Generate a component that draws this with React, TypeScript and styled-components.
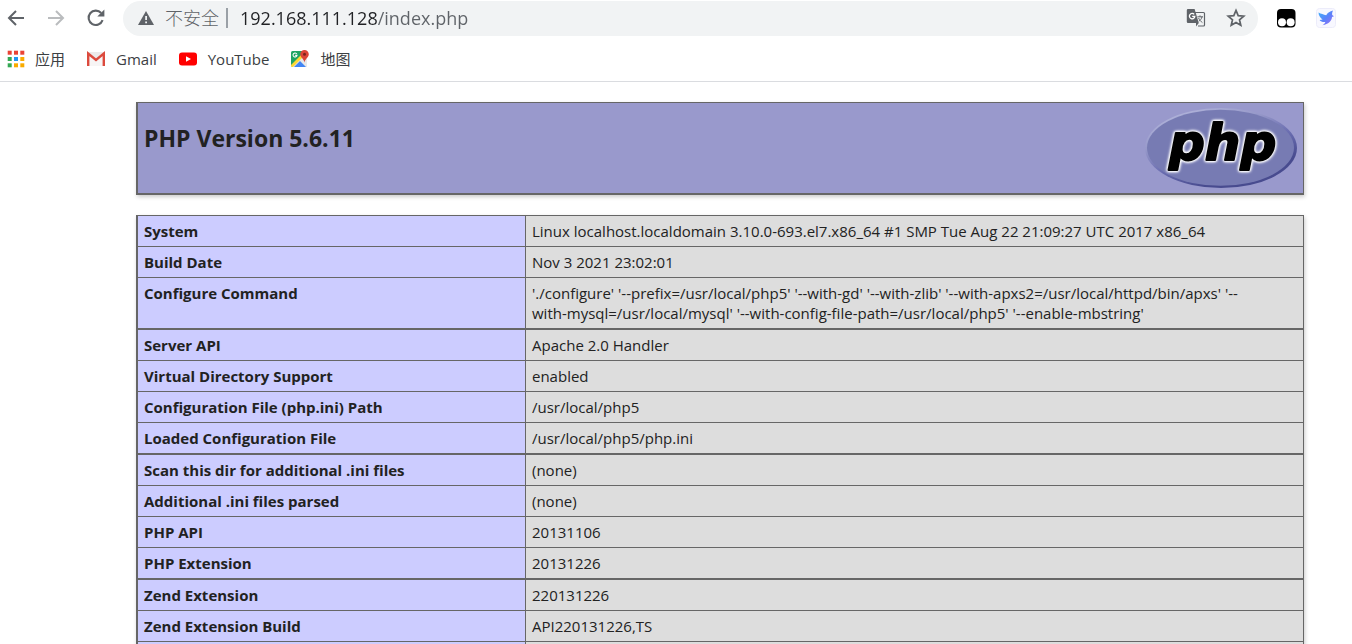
import React from 'react';
import styled, { createGlobalStyle } from 'styled-components';

const Global = createGlobalStyle`
  * { box-sizing: border-box; }
  body {
    margin: 0;
    height: 100vh;
    overflow: hidden;
    background: #fff;
    color: #222;
    font-family: "Open Sans", "Noto Sans CJK SC", sans-serif;
    font-size: 15px;
    line-height: 20px;
  }
`;

const Toolbar = styled.header`
  display: flex;
  align-items: center;
  height: 36px;
  padding-right: 6px;
`;

const IconButton = styled.button`
  display: flex;
  align-items: center;
  justify-content: center;
  flex: none;
  width: 40px;
  height: 32px;
  padding: 0;
  border: 0;
  background: none;
`;

const NavGroup = styled.nav`
  display: flex;
  flex: none;
  margin-left: -4px;
  margin-right: 7px;
`;

const AddressBar = styled.div`
  display: flex;
  flex: 1;
  align-items: center;
  min-width: 0;
  height: 35px;
  margin-top: 1px;
  padding: 0 2px 1px 15px;
  border-radius: 18px;
  background: #f1f3f4;
`;

const SecurityButton = styled.button`
  display: flex;
  flex: none;
  align-items: center;
  gap: 11px;
  padding: 0 7px 0 0;
  border: 0;
  border-right: 2px solid #9aa0a6;
  background: none;
  color: #5f6368;
  font-family: inherit;
  font-size: 18px;
  font-weight: 300;
  line-height: 20px;
`;

const UrlInput = styled.input`
  flex: 1;
  min-width: 0;
  height: 30px;
  margin-left: 12px;
  padding: 0;
  border: 0;
  outline: 0;
  background: linear-gradient(90deg, #202124 137px, #5f6368 137px) text;
  color: transparent;
  font-family: inherit;
  font-size: 18px;
`;

const Extensions = styled.div`
  display: flex;
  margin-left: 8px;
`;

const Bookmarks = styled.nav`
  display: flex;
  align-items: center;
  gap: 21px;
  height: 46px;
  padding: 1px 7px 0;
  border-bottom: 1px solid #dadce0;
`;

const Bookmark = styled.a`
  display: flex;
  align-items: center;
  gap: 10px;
  color: #3c4043;
  font-size: 15px;
  text-decoration: none;
`;

const Page = styled.main`
  padding: 20px 48px 0 136px;
`;

const Banner = styled.section`
  display: flex;
  align-items: flex-start;
  justify-content: space-between;
  height: 93px;
  padding: 3px 6px;
  border: solid #666;
  border-width: 1px 1px 2px 2px;
  background: #9999cc;
  box-shadow: 1px 2px 4px #ccc;
`;

const Title = styled.h1`
  margin: 16px 0 0;
  font-size: 23px;
  line-height: 32px;
`;

const InfoTable = styled.table`
  width: 100%;
  margin-top: 20px;
  border: solid #666;
  border-width: 1px 1px 0 2px;
  border-spacing: 0;
  box-shadow: 1px 2px 4px #ccc;
`;

const Row = styled.tr<{ $heavy?: boolean }>`
  > * {
    height: 31px;
    padding: 5px 6px;
    border-bottom: ${(p) => (p.$heavy ? 2 : 1)}px solid #666;
    text-align: left;
    vertical-align: top;
  }
`;

const Label = styled.th`
  width: 388px;
  border-right: 1px solid #666;
  background: #ccccff;
`;

const Value = styled.td`
  background: #ddd;
`;

const Unbroken = styled.span`
  white-space: nowrap;
`;

const rows: { label: string; value: React.ReactNode; heavy?: boolean }[] = [
  { label: 'System', value: 'Linux localhost.localdomain 3.10.0-693.el7.x86_64 #1 SMP Tue Aug 22 21:09:27 UTC 2017 x86_64' },
  { label: 'Build Date', value: 'Nov 3 2021 23:02:01' },
  {
    label: 'Configure Command',
    value: (
      <>
        './configure' '--prefix=/usr/local/php5' '--with-gd' '--with-zlib' '--with-apxs2=/usr/local/httpd/bin/apxs' '--
        <wbr />
        <Unbroken>with-mysql=/usr/local/mysql'</Unbroken> '--with-config-file-path=/usr/local/php5' '--enable-mbstring'
      </>
    ),
    heavy: true,
  },
  { label: 'Server API', value: 'Apache 2.0 Handler' },
  { label: 'Virtual Directory Support', value: 'enabled' },
  { label: 'Configuration File (php.ini) Path', value: '/usr/local/php5' },
  { label: 'Loaded Configuration File', value: '/usr/local/php5/php.ini', heavy: true },
  { label: 'Scan this dir for additional .ini files', value: '(none)' },
  { label: 'Additional .ini files parsed', value: '(none)' },
  { label: 'PHP API', value: '20131106' },
  { label: 'PHP Extension', value: '20131226', heavy: true },
  { label: 'Zend Extension', value: '220131226' },
  { label: 'Zend Extension Build', value: 'API220131226,TS' },
  { label: '', value: '' },
];

const ArrowIcon = ({ color, flip }: { color: string; flip?: boolean }) => (
  <svg width="18" height="18" viewBox="0 0 18 18" fill="none" stroke={color} strokeWidth="2">
    <path d={flip ? 'M1 9H16M9 2L16 9L9 16' : 'M17 9H2M9 2L2 9L9 16'} />
  </svg>
);

const ReloadIcon = () => (
  <svg width="20" height="20" viewBox="0 0 20 20">
    <path d="M16.6 12.2A7.2 7.2 0 1 1 15.2 5" fill="none" stroke="#5f6368" strokeWidth="2.1" />
    <path d="M18.4 1.5V8.6H11.3Z" fill="#5f6368" />
  </svg>
);

const WarningIcon = () => (
  <svg width="16" height="16" viewBox="0 0 16 16">
    <path d="M8 1L16 15H0Z" fill="#5f6368" />
    <path d="M7.2 6h1.8v4H7.2zM7.2 11.4h1.8v1.8H7.2z" fill="#f1f3f4" />
  </svg>
);

const TranslateIcon = () => (
  <svg width="20" height="20" viewBox="0 0 20 20">
    <path d="M8 4.5H17.5a1 1 0 0 1 1 1V17a1 1 0 0 1-1 1H12" fill="none" stroke="#5f6368" strokeWidth="1.2" />
    <path d="M2 1H8.6L12.8 15H2a1.2 1.2 0 0 1-1.2-1.2V2.2A1.2 1.2 0 0 1 2 1Z" fill="#5f6368" />
    <path d="M12.8 15L10 18.4V15Z" fill="#5f6368" />
    <path d="M8.2 6.4A2.7 2.7 0 1 0 8.8 8.4H6.2" fill="none" stroke="#fff" strokeWidth="1.3" />
    <path d="M11.4 8.8H17M14 7.4V8.8M16 8.8C15.6 11 14 12.4 12.8 13.2M12.6 10C13.4 12 15 13.6 16.4 14.6" fill="none" stroke="#5f6368" />
  </svg>
);

const StarIcon = () => (
  <svg width="20" height="20" viewBox="0 0 20 20">
    <path
      d="M10 2.4L12.2 7.6L17.8 8.1L13.5 11.8L14.8 17.3L10 14.4L5.2 17.3L6.5 11.8L2.2 8.1L7.8 7.6Z"
      fill="none"
      stroke="#5f6368"
      strokeWidth="1.7"
    />
  </svg>
);

const MonkeyIcon = () => (
  <svg width="20" height="20" viewBox="0 0 20 20">
    <rect x="1" y="1" width="18.500" height="18.500" rx="4" fill="#000" />
    <circle cx="6" cy="14.200" r="4" fill="#fff" />
    <circle cx="14.600" cy="14.200" r="4" fill="#fff" />
  </svg>
);

const BirdIcon = () => (
  <svg width="20" height="20" viewBox="0 0 20 20">
    <defs>
      <linearGradient id="bird" x1="0" y1="0" x2="1" y2="1">
        <stop offset="0" stopColor="#3fb4fa" />
        <stop offset=".5" stopColor="#5b82fa" />
        <stop offset="1" stopColor="#a06cf5" />
      </linearGradient>
    </defs>
    <rect x=".5" y=".5" width="19" height="19" rx="3" fill="#f8f8ff" stroke="#ececfa" />
    <path
      d="M2.500 4.500C5 6 7.500 6.400 10.200 7.200C11.500 4.800 14 3.600 17 2.600C16.200 4.200 16 5.600 16.200 7L18 8.200L16 9C15.800 13 12.500 16 6.500 17.200C8 16.200 9 15.200 9.400 14C7 14.400 4.800 13.600 3.600 12L6.600 11.400C4.400 10 2.600 7.600 2.500 4.500Z"
      fill="url(#bird)"
    />
  </svg>
);

const AppsIcon = () => (
  <svg width="18" height="18" viewBox="0 0 18 18">
    {['#ea4335', '#ea4335', '#ea4335', '#34a853', '#2196f3', '#f9ab00', '#34a853', '#f9ab00', '#f9ab00'].map((c, i) => (
      <rect key={i} x={0.7 + (i % 3) * 6.3} y={0.7 + Math.floor(i / 3) * 6.3} width="4" height="4" fill={c} />
    ))}
  </svg>
);

const GmailIcon = () => (
  <svg width="20" height="20" viewBox="0 0 20 20">
    <rect x="1" y="3" width="18" height="14" rx="1.200" fill="#eceaea" />
    <path d="M3 17V4L10 10.500L17 4V17" fill="#f7f5f5" />
    <path d="M2.200 17V4.600L10 11L17.800 4.600V17" fill="none" stroke="#dc4a3d" strokeWidth="2.400" />
  </svg>
);

const YouTubeIcon = () => (
  <svg width="20" height="20" viewBox="0 0 20 20">
    <rect x="1" y="3.500" width="18" height="13" rx="3" fill="#f00" />
    <path d="M8 7.200V12.800L13 10Z" fill="#fff" />
  </svg>
);

const MapsIcon = () => (
  <svg width="20" height="20" viewBox="0 0 20 20">
    <rect x="1" y="2" width="16" height="16" rx="1.500" fill="#1fa463" />
    <path d="M1 17L13 5L17 9V18H2Z" fill="#e8e8e8" />
    <path d="M1 16L12 5L14 7L3 18H2L1 17Z" fill="#fdd835" />
    <path d="M4 18L10 12L16 18Z" fill="#4285f4" />
    <path d="M6.800 5A2 2 0 1 0 7 6.400H5.200" fill="none" stroke="#fff" strokeWidth="1.100" />
    <path d="M14.500 1A4.300 4.300 0 0 0 10.200 5.300C10.200 8.500 13.800 9.500 14.500 13.500C15.200 9.500 18.800 8.500 18.800 5.300A4.300 4.300 0 0 0 14.500 1Z" fill="#db4437" />
    <circle cx="14.500" cy="5.300" r="1.500" fill="#7b231c" />
  </svg>
);

const LogoText = styled.text`
  font: italic bold 50px "DejaVu Sans", sans-serif;
  fill: #000;
  stroke-linejoin: round;
  paint-order: stroke;
  filter: drop-shadow(0 0 1px #fff) drop-shadow(0 0 1px #fff) drop-shadow(0 0 1px #fff);
  stroke: #000;
  stroke-width: 2px;
`;

const PhpLogo = () => (
  <svg width="152" height="84" viewBox="0 0 152 84" role="img" aria-label="PHP logo">
    <defs>
      <linearGradient id="rim" x1="0.200" y1="0" x2="0.800" y2="1">
        <stop offset="0" stopColor="#b4b7dc" />
        <stop offset=".3" stopColor="#9698c9" />
        <stop offset=".55" stopColor="#6a6db0" />
        <stop offset=".8" stopColor="#484b8f" />
        <stop offset="1" stopColor="#484b8f" />
      </linearGradient>
    </defs>
    <ellipse cx="76" cy="42" rx="76" ry="40" fill="url(#rim)" />
    <ellipse cx="75.500" cy="41.800" rx="73.500" ry="38" fill="#777bb3" />
    <LogoText x="24" y="54">php</LogoText>
  </svg>
);

const App = () => (
  <>
    <Global />
    <Toolbar>
      <NavGroup aria-label="History">
        <IconButton aria-label="Back"><ArrowIcon color="#5f6368" /></IconButton>
        <IconButton aria-label="Forward"><ArrowIcon color="#babcbe" flip /></IconButton>
        <IconButton aria-label="Reload"><ReloadIcon /></IconButton>
      </NavGroup>
      <AddressBar>
        <SecurityButton><WarningIcon />不安全</SecurityButton>
        <UrlInput aria-label="Address" defaultValue="192.168.111.128/index.php" />
        <IconButton aria-label="Translate"><TranslateIcon /></IconButton>
        <IconButton aria-label="Bookmark this page"><StarIcon /></IconButton>
      </AddressBar>
      <Extensions>
        <IconButton aria-label="Scripts"><MonkeyIcon /></IconButton>
        <IconButton aria-label="Bird"><BirdIcon /></IconButton>
      </Extensions>
    </Toolbar>
    <Bookmarks aria-label="Bookmarks">
      <Bookmark href="#apps"><AppsIcon />应用</Bookmark>
      <Bookmark href="#gmail"><GmailIcon />Gmail</Bookmark>
      <Bookmark href="#youtube"><YouTubeIcon />YouTube</Bookmark>
      <Bookmark href="#maps"><MapsIcon />地图</Bookmark>
    </Bookmarks>
    <Page>
      <Banner>
        <Title>PHP Version 5.6.11</Title>
        <PhpLogo />
      </Banner>
      <InfoTable>
        <tbody>
          {rows.map((r, i) => (
            <Row key={i} $heavy={r.heavy}>
              <Label scope="row">{r.label}</Label>
              <Value>{r.value}</Value>
            </Row>
          ))}
        </tbody>
      </InfoTable>
    </Page>
  </>
);

export default App;
